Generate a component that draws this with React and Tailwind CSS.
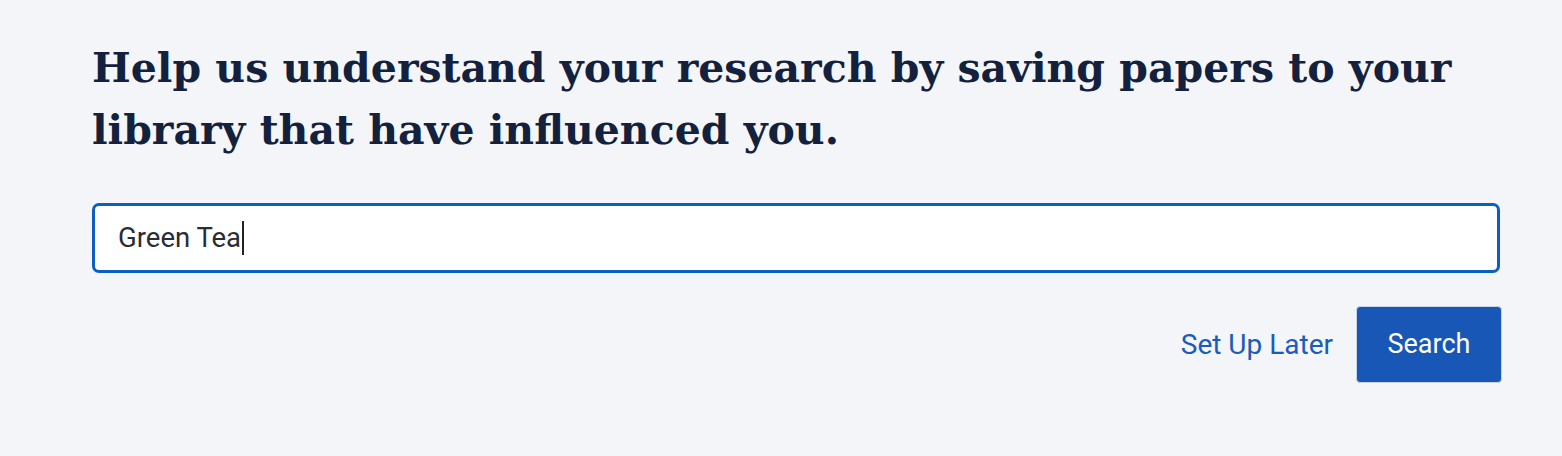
export default function App() {
  return (
    <div className="min-h-[456px] w-full bg-[#f3f5f8] pl-[92px] pr-[62px] pt-[37px]">
      <h1
        className="whitespace-nowrap text-[41px] leading-[62px] font-bold text-[#14213d]"
        style={{ fontFamily: '"DejaVu Serif", "Liberation Serif", serif' }}
      >
        Help us understand your research by saving papers to your
        <br />
        library that have influenced you.
      </h1>
      <div className="mt-[42px]">
        <div className="flex h-[70px] w-[1408px] items-center rounded-[7px] border-[3px] border-[#0b5ec4] bg-white pl-[23px]">
          <span
            className="text-[27.5px] text-[#2a2d33]"
            style={{ fontFamily: "Roboto, sans-serif" }}
          >
            Green Tea
          </span>
          <span className="ml-[1px] h-[34px] w-[2px] bg-[#222]" />
        </div>
      </div>
      <div
        className="mt-[33px] flex w-[1410px] items-center justify-end gap-[23px]"
        style={{ fontFamily: "Roboto, sans-serif" }}
      >
        <span className="text-[28px] text-[#1a5cb8]">Set Up Later</span>
        <button className="h-[77px] w-[146px] rounded-[4px] border border-[#c9d3e4] bg-[#1857b5] text-[27px] font-normal text-white">
          Search
        </button>
      </div>
    </div>
  );
}
